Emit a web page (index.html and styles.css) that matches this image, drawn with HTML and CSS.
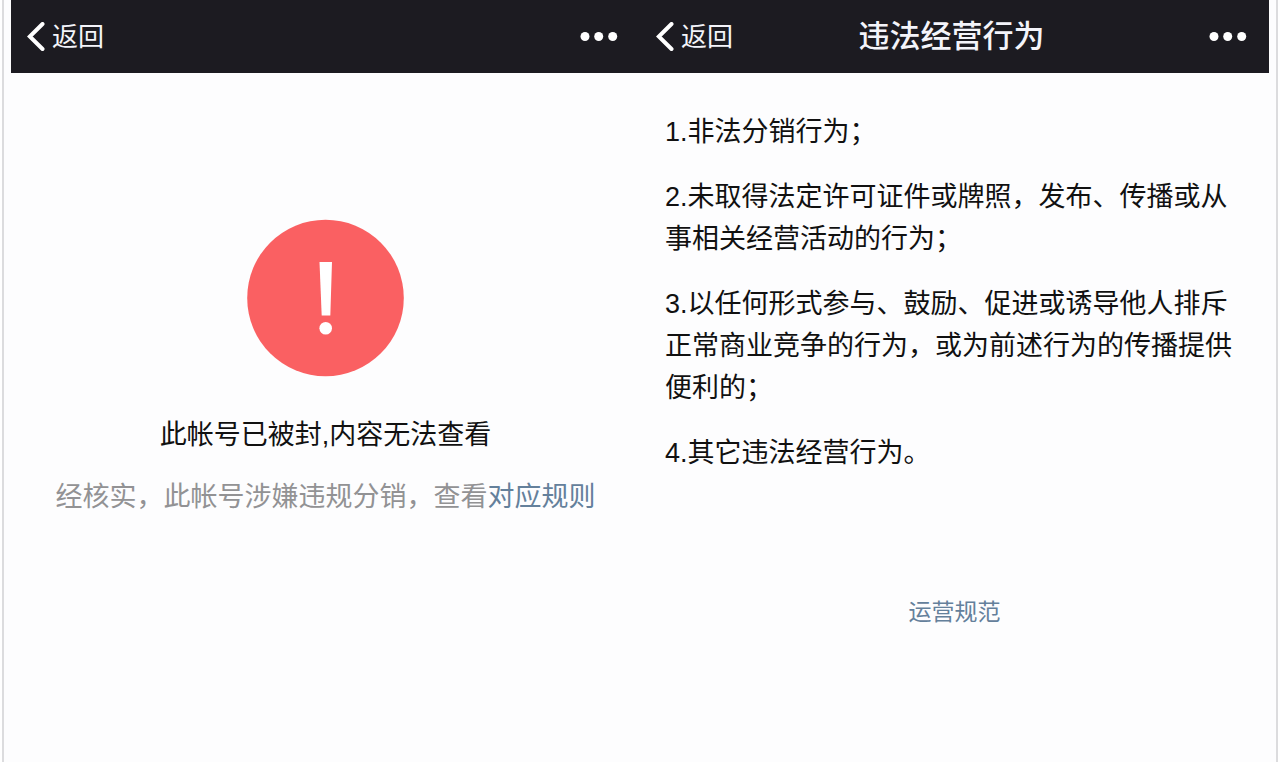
FILE: index.html
```html
<!DOCTYPE html>
<html lang="zh-CN">
<head>
<meta charset="utf-8">
<meta name="viewport" content="width=device-width, initial-scale=1">
<title>违法经营行为</title>
<link rel="stylesheet" href="styles.css">
</head>
<body>
<div class="frame">
  <section class="screen">
    <header class="bar">
      <button class="back" type="button">
        <svg class="chevron" width="18" height="30" viewBox="0 0 18 30" aria-hidden="true"><path d="M15.500 2 2.800 14.500l12.700 12.500"/></svg>返回
      </button>
      <button class="more" type="button" aria-label="更多">
        <svg class="dots" width="38" height="10" viewBox="0 0 38 10" aria-hidden="true"><circle cx="5" cy="4.500" r="4.500"/><circle cx="18.700" cy="4.500" r="4.500"/><circle cx="32.700" cy="4.500" r="4.500"/></svg>
      </button>
    </header>
    <main class="notice">
      <svg class="alert" width="158" height="158" viewBox="0 0 158 158" aria-hidden="true">
        <circle class="alert-disc" cx="78.500" cy="79" r="78.300"/>
        <path class="alert-mark" d="M72.500 43h12.500l-1.700 53.500h-8.600z"/>
        <circle class="alert-mark" cx="78.700" cy="109.300" r="6.300"/>
      </svg>
      <h1 class="notice-title">此帐号已被封,内容无法查看</h1>
      <p class="notice-text">经核实，此帐号涉嫌违规分销，查看<a class="link" href="#rules">对应规则</a></p>
    </main>
  </section>
  <section class="screen" id="rules">
    <header class="bar">
      <button class="back" type="button">
        <svg class="chevron" width="18" height="30" viewBox="0 0 18 30" aria-hidden="true"><path d="M15.500 2 2.800 14.500l12.700 12.500"/></svg>返回
      </button>
      <h2 class="bar-title">违法经营行为</h2>
      <button class="more" type="button" aria-label="更多">
        <svg class="dots" width="38" height="10" viewBox="0 0 38 10" aria-hidden="true"><circle cx="5" cy="4.500" r="4.500"/><circle cx="18.700" cy="4.500" r="4.500"/><circle cx="32.700" cy="4.500" r="4.500"/></svg>
      </button>
    </header>
    <main class="rules">
      <p class="rule">1.非法分销行为；</p>
      <p class="rule">2.未取得法定许可证件或牌照，发布、传播或从事相关经营活动的行为；</p>
      <p class="rule">3.以任何形式参与、鼓励、促进或诱导他人排斥正常商业竞争的行为，或为前述行为的传播提供便利的；</p>
      <p class="rule">4.其它违法经营行为。</p>
    </main>
    <footer class="footer"><a class="link" href="#norms">运营规范</a></footer>
  </section>
</div>
</body>
</html>
```
FILE: styles.css
```css
* {
  box-sizing: border-box;
}

body {
  margin: 0;
  background: #fff;
  color: #111;
  font-family: "Liberation Sans", "Noto Sans CJK SC", sans-serif;
  font-size: 27px;
  line-height: 42px;
}

h1, h2, p {
  margin: 0;
  font-size: inherit;
  font-weight: 400;
}

button {
  padding: 0;
  border: 0;
  background: none;
  color: inherit;
  font: inherit;
}

.frame {
  display: grid;
  grid-template-columns: 1fr 1fr;
  min-height: 100vh;
  margin: 0 2px;
  padding: 0 7px;
  border: solid #dcdcde;
  border-width: 0 2px;
  background: #fdfdfe;
}

.bar {
  display: grid;
  grid-template-columns: 1fr auto 1fr;
  align-items: center;
  height: 73px;
  padding: 1px 22px 0 16px;
  background: #1c1b21;
  color: #f4f4fa;
}

.back {
  display: flex;
  align-items: center;
  justify-self: start;
  gap: 7px;
  font-size: 26px;
}

.chevron {
  fill: none;
  stroke: #fff;
  stroke-width: 4;
  stroke-linecap: round;
}

.bar-title {
  font-size: 31px;
  font-weight: 500;
}

.more {
  display: flex;
  grid-column: 3;
  justify-self: end;
}

.dots {
  fill: #fff;
}

.notice {
  display: flex;
  flex-direction: column;
  align-items: center;
  padding-top: 146px;
}

.alert-disc {
  fill: #fa6062;
}

.alert-mark {
  fill: #fff;
}

.notice-title {
  margin-top: 37px;
}

.notice-text {
  margin-top: 20px;
  color: #929294;
}

.link {
  color: #64809b;
  text-decoration: none;
}

.rules {
  display: grid;
  gap: 23px;
  padding: 38px 29px 0 25px;
}

.footer {
  margin-top: 117px;
  font-size: 23px;
  text-align: center;
}
```
